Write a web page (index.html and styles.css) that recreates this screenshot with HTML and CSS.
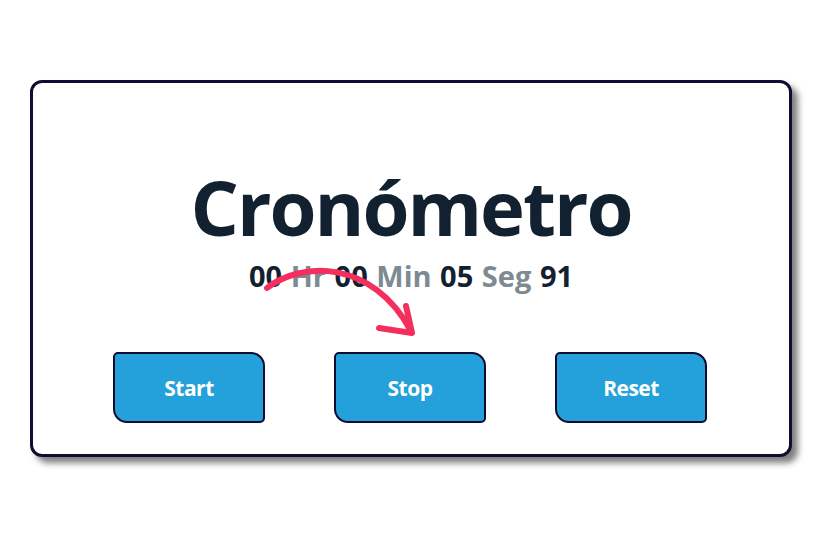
FILE: index.html
```html
<!DOCTYPE html>
<html lang="es">
<head>
<meta charset="utf-8">
<title>Cronómetro</title>
<link rel="stylesheet" href="styles.css">
</head>
<body>
<main class="page">
  <section class="card">
    <h1 class="title">Cronómetro</h1>
    <p class="time">
      <span class="num">00</span> <span class="unit">Hr</span>
      <span class="num">00</span> <span class="unit">Min</span>
      <span class="num">05</span> <span class="unit">Seg</span>
      <span class="num">91</span>
    </p>
    <div class="buttons">
      <button class="btn">Start</button>
      <button class="btn">Stop</button>
      <button class="btn">Reset</button>
    </div>
  </section>
  <svg class="arrow" width="827" height="536" viewBox="0 0 827 536">
    <path d="M267 288 C 300 262, 372 258, 411 331" fill="none" stroke="#f42f5d" stroke-width="6" stroke-linecap="round"/>
    <path d="M406 306 L 412 333 L 379 328" fill="none" stroke="#f42f5d" stroke-width="6" stroke-linecap="round" stroke-linejoin="round"/>
  </svg>
</main>
</body>
</html>
```
FILE: styles.css
```css
html, body {
  margin: 0;
  padding: 0;
  background: #ffffff;
}
.page {
  position: relative;
  width: 827px;
  height: 536px;
  padding: 80px 0 0 30px;
  box-sizing: border-box;
}
.card {
  width: 762px;
  height: 377px;
  box-sizing: border-box;
  border: 3px solid #140b33;
  border-radius: 12px;
  background: #fff;
  box-shadow: 6px 6px 6px rgba(0, 0, 0, 0.5);
  display: flex;
  flex-direction: column;
  align-items: center;
  padding-top: 86px;
  font-family: "Open Sans", "Noto Sans", sans-serif;
}
.title {
  margin: 0;
  font-size: 76px;
  line-height: 76px;
  font-weight: 700;
  color: #11212f;
  letter-spacing: -2px;
}
.time {
  margin: 16px 0 0;
  font-size: 29px;
  line-height: 30px;
  font-weight: 700;
  letter-spacing: 0;
  word-spacing: 1px;
  color: #11212f;
}
.unit {
  color: #7e8a92;
}
.buttons {
  display: flex;
  gap: 69px;
  margin-top: 61px;
  margin-left: -2px;
}
.btn {
  box-sizing: border-box;
  width: 152px;
  height: 71px;
  background: #24a0db;
  border: 2px solid #120b30;
  border-radius: 5px 14px 5px 14px;
  color: #ffffff;
  font-family: "Open Sans", "Noto Sans", sans-serif;
  font-size: 21px;
  font-weight: 700;
  letter-spacing: -0.5px;
  padding: 0;
}
.arrow {
  position: absolute;
  left: 0;
  top: 0;
  pointer-events: none;
}
```
